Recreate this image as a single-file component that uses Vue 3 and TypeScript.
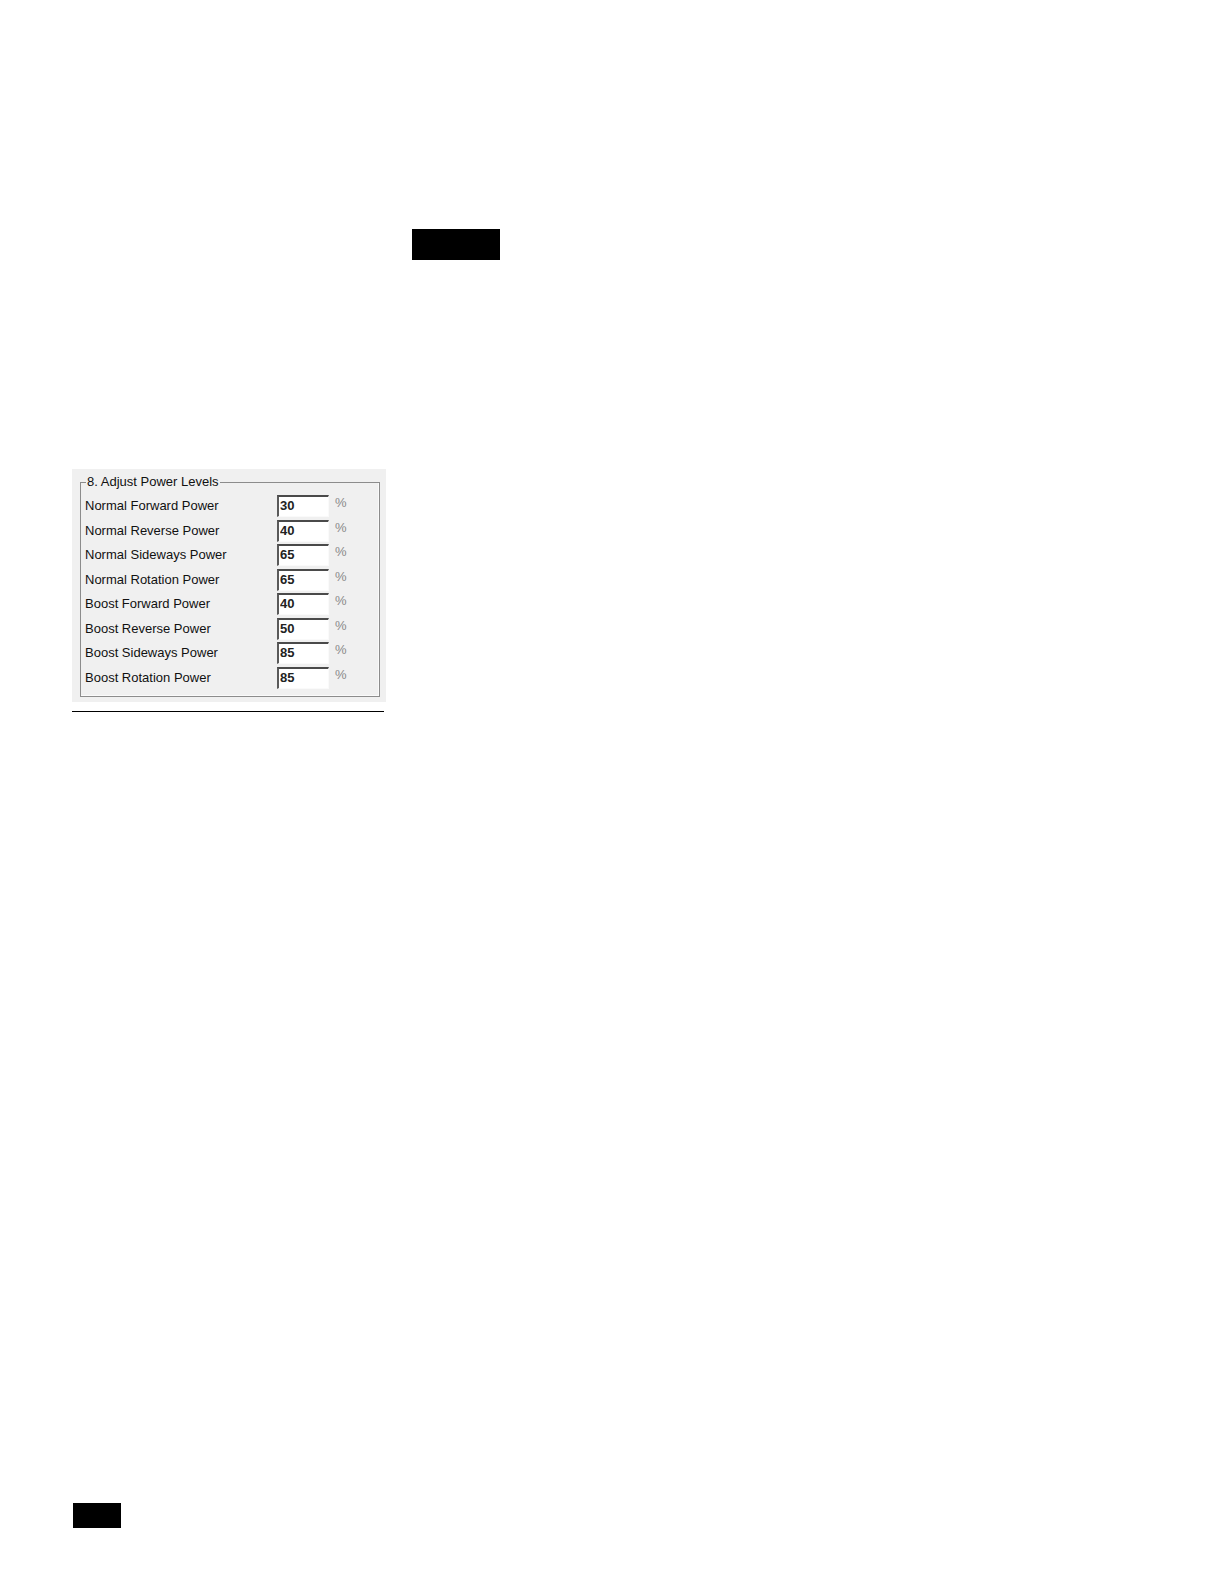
<script setup lang="ts">
import { ref } from 'vue'

interface PowerLevel {
  id: string
  label: string
  value: string
}

const levels = ref<PowerLevel[]>([
  { id: 'normal-forward', label: 'Normal Forward Power', value: '30' },
  { id: 'normal-reverse', label: 'Normal Reverse Power', value: '40' },
  { id: 'normal-sideways', label: 'Normal Sideways Power', value: '65' },
  { id: 'normal-rotation', label: 'Normal Rotation Power', value: '65' },
  { id: 'boost-forward', label: 'Boost Forward Power', value: '40' },
  { id: 'boost-reverse', label: 'Boost Reverse Power', value: '50' },
  { id: 'boost-sideways', label: 'Boost Sideways Power', value: '85' },
  { id: 'boost-rotation', label: 'Boost Rotation Power', value: '85' },
])
</script>

<template>
  <div class="page">
    <header class="head">
      <div class="tab"></div>
    </header>
    <main class="figure">
      <form class="panel" @submit.prevent>
        <fieldset class="group">
          <legend>8. Adjust Power Levels</legend>
          <div class="rows">
            <div v-for="level in levels" :key="level.id" class="row">
              <label :for="level.id">{{ level.label }}</label>
              <input :id="level.id" v-model="level.value" type="text" inputmode="numeric" />
              <span class="unit">%</span>
            </div>
          </div>
        </fieldset>
      </form>
      <hr class="rule" />
    </main>
    <footer class="foot">
      <div class="folio"></div>
    </footer>
  </div>
</template>

<style>
body {
  margin: 0;
  background: #fff;
}
</style>

<style scoped>
.page {
  box-sizing: border-box;
  display: flex;
  flex-direction: column;
  min-height: 100vh;
  padding: 229px 72px 56px;
  font-family: "Liberation Sans", Arial, sans-serif;
  font-size: 13px;
  color: #111;
}

.head {
  padding-left: 340px;
  margin-bottom: 209px;
}

.tab {
  width: 88px;
  height: 31px;
  background: #000;
}

.figure {
  flex: 1;
}

.panel {
  box-sizing: border-box;
  width: 314px;
  padding: 5px 6px 5px 8px;
  background: #f0f0f0;
}

.group {
  margin: 0;
  padding: 0 4px 5px;
  border: 1px solid #8c8c8c;
  box-shadow: inset -1px -1px #fafafa;
}

legend {
  margin-left: 1px;
  padding: 0 1px;
  line-height: 16px;
}

.rows {
  display: grid;
  grid-auto-rows: 1fr;
  height: 196px;
  margin-top: 5px;
}

.row {
  display: grid;
  grid-template-columns: 192px 52px 1fr;
  align-items: start;
}

label {
  line-height: 22px;
}

input {
  box-sizing: border-box;
  width: 52px;
  height: 22px;
  margin: 0;
  padding: 0 1px 2px;
  border: 1px solid #fafafa;
  border-top: 2px solid #4a4a4a;
  border-left: 2px solid #5a5a5a;
  border-radius: 0;
  background: #fff;
  color: #222;
  font-family: "Liberation Sans Narrow", "Liberation Sans", Arial, sans-serif;
  font-size: 13px;
  font-weight: bold;
}

.unit {
  padding-left: 6px;
  line-height: 16px;
  color: #8a8a8a;
}

.rule {
  width: 312px;
  height: 1px;
  margin: 9px 0 0;
  border: 0;
  background: #000;
}

.foot {
  padding-left: 1px;
}

.folio {
  width: 48px;
  height: 25px;
  background: #000;
}
</style>
